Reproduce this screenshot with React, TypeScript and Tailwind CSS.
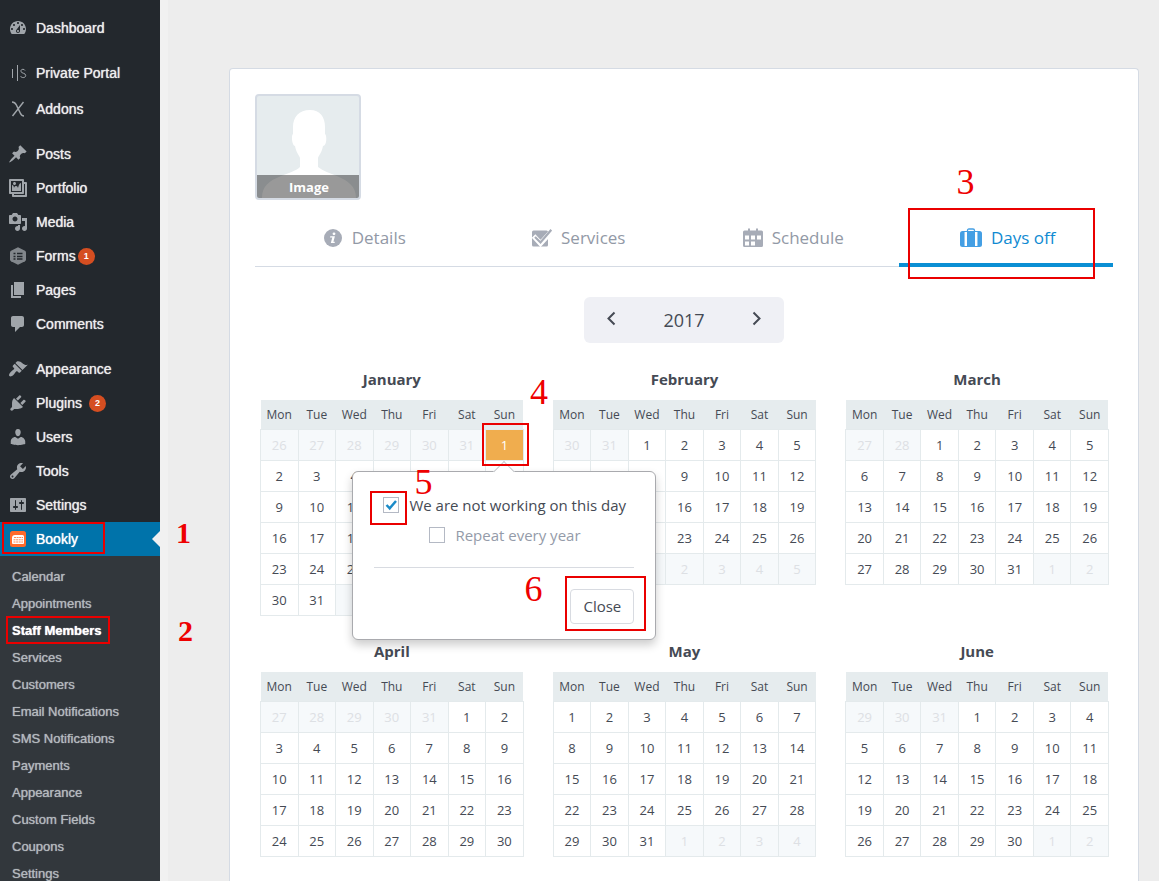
import { useState } from "react";
import type { ReactNode } from "react";

const YEAR = 2017;
const MONTHS = ["January", "February", "March", "April", "May", "June"];
const WEEKDAYS = ["Mon", "Tue", "Wed", "Thu", "Fri", "Sat", "Sun"];

type MenuItem = { label: string; icon: ReactNode; badge?: number; active?: boolean };

const Dash = ({ d }: { d: string }) => (
  <svg viewBox="0 0 20 20" className="w-5 h-5" fill="currentColor" fillRule="evenodd">
    <path d={d} />
  </svg>
);

const icons = {
  dashboard: <Dash d="M3.76 16h12.48c1.1-1.37 1.76-3.11 1.76-5 0-4.42-3.58-8-8-8s-8 3.58-8 8c0 1.89.66 3.63 1.76 5zM10 4c.55 0 1 .45 1 1s-.45 1-1 1-1-.45-1-1 .45-1 1-1zM6 6c.55 0 1 .45 1 1s-.45 1-1 1-1-.45-1-1 .45-1 1-1zm8 0c.55 0 1 .45 1 1s-.45 1-1 1-1-.45-1-1 .45-1 1-1zm-5.37 5.55L12 7v6c0 1.1-.9 2-2 2s-2-.9-2-2c0-.57.24-1.08.63-1.45zM4 10c.55 0 1 .45 1 1s-.45 1-1 1-1-.45-1-1 .45-1 1-1zm12 0c.55 0 1 .45 1 1s-.45 1-1 1-1-.45-1-1 .45-1 1-1zm-5 3c0-.55-.45-1-1-1s-1 .45-1 1 .45 1 1 1 1-.45 1-1z" />,
  portal: (
    <svg viewBox="0 0 20 20" className="w-5 h-5" fill="none" stroke="currentColor">
      <path d="M4.500 6v9M9.500 2v16" />
      <path d="M17 7.500c-.4-.8-1.100-1.200-2-1.200-1.300 0-2.100.7-2.100 1.800 0 2.700 4.800 1.500 4.800 4.300 0 1.400-1.100 2.200-2.500 2.200-1.300 0-2.200-.6-2.700-1.600" />
    </svg>
  ),
  addons: (
    <svg viewBox="0 0 20 20" className="w-5 h-5" fill="none" stroke="currentColor" strokeWidth="1.400">
      <path d="M4 3c2.500 0 3.200.8 4.300 2.900l4 8.200c1.100 2.200 1.700 2.900 3.700 2.900M15.500 3L4.500 17" />
    </svg>
  ),
  posts: <Dash d="M10.44 3.02l1.82-1.82 6.36 6.35-1.83 1.82c-1.05-.68-2.48-.57-3.41.36l-.75.75c-.92.93-1.04 2.35-.35 3.41l-1.83 1.82-2.41-2.41-2.8 2.79c-.42.42-3.38 2.71-3.8 2.29s1.86-3.39 2.28-3.81l2.79-2.79L4.1 9.36l1.83-1.82c1.05.69 2.48.57 3.4-.36l.75-.75c.93-.92 1.05-2.35.36-3.41z" />,
  portfolio: <Dash d="M16 4h1.96c.57 0 1.04.47 1.04 1.04v12.92c0 .57-.47 1.04-1.04 1.04H5.04C4.47 19 4 18.53 4 17.96V16H2.04C1.47 16 1 15.53 1 14.96V2.04C1 1.47 1.47 1 2.04 1h12.92c.57 0 1.04.47 1.04 1.04V4zM3 14h11V3H3v11zm5-8.5C8 4.67 7.33 4 6.5 4S5 4.67 5 5.5 5.67 7 6.5 7 8 6.33 8 5.5zm2 4.5s1-5 3-5v8H4V7c2 0 2 3 2 3s.33-2 2-2 2 2 2 2zm7 7V6h-1v8.96c0 .57-.47 1.04-1.04 1.04H6v1h11z" />,
  media: <Dash d="M13 11V4c0-.55-.45-1-1-1h-1.67L9 1H5L3.67 3H2c-.55 0-1 .45-1 1v7c0 .55.45 1 1 1h10c.55 0 1-.45 1-1zM7 4.5c1.38 0 2.5 1.12 2.5 2.5S8.38 9.5 7 9.5 4.5 8.38 4.5 7 5.62 4.5 7 4.5zM14 6h5v10.5c0 1.38-1.12 2.5-2.5 2.5S14 17.88 14 16.5s1.12-2.5 2.5-2.5c.17 0 .34.02.5.05V9h-3V6zm-4 8.05V13h2v3.5c0 1.38-1.12 2.5-2.5 2.5S7 17.88 7 16.5 8.12 14 9.5 14c.17 0 .34.02.5.05z" />,
  forms: (
    <svg viewBox="0 0 20 20" className="w-5 h-5">
      <path d="M10 1.200l7 3.600q1 .6 1 1.700v7q0 1.100-1 1.700l-7 3.600-7-3.600q-1-.6-1-1.700v-7q0-1.100 1-1.700z" fill="#82878c" />
      <path d="M5.500 7.500h2M9 7.500h5.500M5.500 10.500h2M9 10.500h5.500M5.500 13h2M9 13h5.500" stroke="#23282d" strokeWidth="1.300" />
    </svg>
  ),
  pages: <Dash d="M6 15V2h10v13H6zm-1 1h8v2H3V5h2v11z" />,
  comments: <Dash d="M5 2h9c1.1 0 2 .9 2 2v7c0 1.1-.9 2-2 2h-2l-5 5v-5H5c-1.1 0-2-.9-2-2V4c0-1.1.9-2 2-2z" />,
  appearance: <Dash d="M14.48 11.06L7.41 3.99l1.5-1.5c.5-.56 2.3-.47 3.51.32 1.21.8 1.43 1.28 2.91 2.1 1.18.64 2.45 1.26 4.45.85zm-.71.71L6.7 4.7 4.93 6.47c-.39.39-.39 1.02 0 1.41l1.06 1.06c.39.39.39 1.03 0 1.42-.6.6-1.43 1.11-2.21 1.69-.35.26-.7.53-1.01.84C1.43 14.23.4 16.08 1.4 17.07c.99 1 2.84-.03 4.18-1.36.31-.31.58-.66.85-1.02.57-.78 1.08-1.61 1.69-2.21.39-.39 1.02-.39 1.41 0l1.06 1.06c.39.39 1.02.39 1.41 0z" />,
  plugins: <Dash d="M13.11 4.36L9.87 7.6 8 5.73l3.24-3.24c.35-.34 1.05-.2 1.56.32.52.51.66 1.21.31 1.55zm-8 1.77l.91-1.12 9.01 9.01-1.19.84c-.71.71-2.63 1.16-3.82 1.16H6.14L4.9 17.26c-.59.59-1.54.59-2.12 0-.59-.58-.59-1.53 0-2.12l1.24-1.24v-3.88c0-1.13.4-3.19 1.09-3.89zm7.26 3.97l3.24-3.24c.34-.35 1.04-.21 1.55.31.52.51.66 1.21.31 1.55l-3.24 3.25z" />,
  users: <Dash d="M10 9.25c-2.27 0-2.73-3.44-2.73-3.44C7 4.02 7.82 2 9.97 2c2.16 0 2.98 2.02 2.71 3.81 0 0-.41 3.44-2.68 3.44zm0 2.57L12.72 10c2.39 0 4.52 2.33 4.52 4.53v2.49s-3.65 1.13-7.24 1.13c-3.65 0-7.24-1.13-7.24-1.13v-2.49c0-2.25 1.94-4.48 4.47-4.48z" />,
  tools: <Dash d="M16.68 9.77c-1.34 1.34-3.3 1.67-4.95.99l-5.41 6.52c-.99.99-2.59.99-3.58 0s-.99-2.59 0-3.57l6.52-5.42c-.68-1.65-.35-3.61.99-4.95 1.28-1.28 3.12-1.62 4.72-1.06l-2.89 2.89 2.82 2.82 2.86-2.87c.53 1.58.18 3.39-1.08 4.65zM3.81 16.21c.4.39 1.04.39 1.43 0 .4-.4.4-1.04 0-1.43-.39-.4-1.03-.4-1.43 0-.39.39-.39 1.03 0 1.43z" />,
  settings: <Dash d="M18 16V4c0-.55-.45-1-1-1H3c-.55 0-1 .45-1 1v12c0 .55.45 1 1 1h14c.55 0 1-.45 1-1zM8 11h1c.55 0 1 .45 1 1s-.45 1-1 1H8v1.5c0 .28-.22.5-.5.5s-.5-.22-.5-.5V13H6c-.55 0-1-.45-1-1s.45-1 1-1h1V5.5c0-.28.22-.5.5-.5s.5.22.5.5V11zm5-2h-1c-.55 0-1-.45-1-1s.45-1 1-1h1V5.5c0-.28.22-.5.5-.5s.5.22.5.5V7h1c.55 0 1 .45 1 1s-.45 1-1 1h-1v5.5c0 .28-.22.5-.5.5s-.5-.22-.5-.5V9z" />,
  bookly: (
    <svg viewBox="0 0 20 20" className="w-5 h-5">
      <rect x="2" y="2" width="16" height="16" rx="2.500" fill="#ff6a2b" />
      <path d="M7 6h7.500a1.500 1.500 0 0 1 1.500 1.500V14a1 1 0 0 1-1 1H5a1 1 0 0 1-1-1V9q0-3 3-3z" fill="#fff" />
      <path d="M6 8.500h9M5.500 10.800h9.500M5.500 13h9.500" stroke="#ff6a2b" strokeWidth=".8" strokeDasharray="2 .6" />
    </svg>
  ),
};

const menuGroups: MenuItem[][] = [
  [{ label: "Dashboard", icon: icons.dashboard }],
  [
    { label: "Private Portal", icon: icons.portal },
    { label: "Addons", icon: icons.addons },
  ],
  [
    { label: "Posts", icon: icons.posts },
    { label: "Portfolio", icon: icons.portfolio },
    { label: "Media", icon: icons.media },
    { label: "Forms", icon: icons.forms, badge: 1 },
    { label: "Pages", icon: icons.pages },
    { label: "Comments", icon: icons.comments },
  ],
  [
    { label: "Appearance", icon: icons.appearance },
    { label: "Plugins", icon: icons.plugins, badge: 2 },
    { label: "Users", icon: icons.users },
    { label: "Tools", icon: icons.tools },
    { label: "Settings", icon: icons.settings },
    { label: "Bookly", icon: icons.bookly, active: true },
  ],
];

const submenu = [
  "Calendar",
  "Appointments",
  "Staff Members",
  "Services",
  "Customers",
  "Email Notifications",
  "SMS Notifications",
  "Payments",
  "Appearance",
  "Custom Fields",
  "Coupons",
  "Settings",
];

// Red frame and step number laid over the control they point at
const Frame = ({ className }: { className: string }) => (
  <span className={`absolute border-2 border-[#ea0000] pointer-events-none ${className}`} />
);

const Step = ({ n, className }: { n: number; className: string }) => (
  <span className={`absolute font-['Liberation_Serif',serif] leading-none text-[#ee0000] pointer-events-none ${className}`}>{n}</span>
);

function Sidebar() {
  return (
    <nav className="relative z-20 w-40 shrink-0 bg-[#23282d] pt-[11px] font-['Liberation_Sans',sans-serif] text-sm">
      <div className="flex flex-col gap-[11px]">
        {menuGroups.map((group, g) => (
          <ul key={g} className={g === 1 ? "flex flex-col gap-0.5" : "flex flex-col"}>
            {group.map(item => (
              <li key={item.label} className={item.active ? "relative bg-[#0073aa]" : "relative"}>
                <a href="#" className="flex h-[34px] items-center pl-2">
                  <span className="text-[#a0a5aa]">{item.icon}</span>
                  <span className={`ml-2 [text-shadow:0_0_1px_currentColor] ${item.active ? "text-white" : "text-[#eeeeee]"}`}>{item.label}</span>
                  {item.badge && (
                    <span className={`flex size-[17px] items-center justify-center rounded-full bg-[#d54e21] text-[9px] font-bold text-white ${item.badge === 1 ? "ml-0.5" : "ml-[7px]"}`}>
                      {item.badge}
                    </span>
                  )}
                </a>
                {item.active && (
                  <>
                    <span className="absolute right-0 top-[9px] border-8 border-l-0 border-transparent border-r-[#f0f0f1]" />
                    <Frame className="left-0.5 top-0 w-[103px] h-8" />
                    <Step n={1} className="left-44 -top-1 text-3xl font-bold" />
                  </>
                )}
              </li>
            ))}
          </ul>
        ))}
      </div>
      <ul className="bg-[#32373c] pt-2 pb-2 text-[13px]">
        {submenu.map(label => {
          const current = label === "Staff Members";
          return (
            <li key={label} className="relative">
              <a href="#" className={`flex h-[27px] items-center pl-3 [text-shadow:0_0_1px_currentColor] ${current ? "font-bold text-white" : "text-[#b4b9be]"}`}>
                {label}
              </a>
              {current && (
                <>
                  <Frame className="left-1.5 -top-0.5 w-[104px] h-7" />
                  <Step n={2} className="left-[178px] -top-0.5 text-3xl font-bold" />
                </>
              )}
            </li>
          );
        })}
      </ul>
    </nav>
  );
}

function Avatar() {
  return (
    <button className="relative block size-[106px] overflow-hidden rounded border-2 border-[#d5dbe4] bg-[#e6ecee]">
      <svg viewBox="0 0 102 102" className="w-full h-full" fill="#fff">
        <path d="M53 14c-11 0-17 7-17 17v7c-2 1-1 12 2 12 1 6 4 9 5 12v9c-4 4-12 6-19 9C12 85 5 90 5 102h94c0-12-8-17-19-22-7-3-14-5-19-9v-9c1-3 4-6 5-12 4 0 4-11 2-12v-7c0-10-5-17-15-17z" />
      </svg>
      <span className="absolute inset-x-0 bottom-0 h-[23px] bg-black/40 pl-0.5 text-center text-[13px] leading-6 font-bold text-white">Image</span>
    </button>
  );
}

const tabs: { label: string; icon: ReactNode }[] = [
  {
    label: "Details",
    icon: (
      <svg viewBox="0 0 20 20" className="w-5 h-5 text-[#a7acb7]">
        <circle cx="10" cy="10" r="9" fill="currentColor" />
        <circle cx="11" cy="5.800" r="1.400" fill="#fff" />
        <path d="M7.300 8.300h4.600l-1.500 5.500h1.300v1.200H7.800l1.500-5.500H7z" fill="#fff" />
      </svg>
    ),
  },
  {
    label: "Services",
    icon: (
      <svg viewBox="0 0 20 20" className="w-5 h-5 text-[#a7acb7]">
        <rect y="2.500" width="16" height="16" rx="1.500" fill="currentColor" />
        <path d="M1.500 8l7 7.500L20 3" fill="none" stroke="#fff" strokeWidth="5" />
        <path d="M3 9l5.500 5.500L19.300 1.800" fill="none" stroke="currentColor" strokeWidth="2.200" />
      </svg>
    ),
  },
  {
    label: "Schedule",
    icon: (
      <svg viewBox="0 0 20 20" className="w-5 h-5 text-[#a7acb7]">
        <path d="M1.500 2.500H5V.5h2v2h6v-2h2v2h3.500Q20 2.500 20 4v13.500q0 1.500-1.500 1.500h-17Q0 19 0 17.500V4Q0 2.500 1.500 2.500z" fill="currentColor" />
        <path d="M2 7.500h4v4H2zM8 7.500h4v4H8zM14 7.500h4v4h-4zM2 13.500h4v4H2zM8 13.500h4v4H8z" fill="#fff" />
      </svg>
    ),
  },
  {
    label: "Days off",
    icon: (
      <svg viewBox="0 0 22 20" className="w-[22px] h-5 text-[#449fe4]">
        <path d="M7.500 4V2.500Q7.500 1 9 1h4q1.500 0 1.500 1.500V4" fill="none" stroke="currentColor" strokeWidth="1.300" />
        <rect y="3" width="22" height="16" rx="2.500" fill="currentColor" />
        <path d="M4 4h3v14H4zM15 4h3v14h-3z" fill="#fff" />
        <path d="M4.300 4v14M17.700 4v14" stroke="currentColor" strokeWidth=".7" />
      </svg>
    ),
  },
];

function Tabs() {
  const [active, setActive] = useState("Days off");

  return (
    <div role="tablist" className="mt-2.5 grid grid-cols-4 border-b border-[#d5dbe4]">
      {tabs.map(tab => (
        <div key={tab.label} className="relative">
          <button
            role="tab"
            aria-selected={active === tab.label}
            onClick={() => setActive(tab.label)}
            className={`-mb-px flex h-[57px] w-full items-center justify-center gap-[9px] border-b-4 pt-0.5 pl-1 text-[17px] ${
              active === tab.label ? "border-[#0a8fd4] text-[#0f8ad2]" : "border-transparent text-[#9299a6]"
            }`}
          >
            {tab.icon}
            {tab.label}
          </button>
          {tab.label === "Days off" && (
            <>
              <Frame className="left-[9px] -top-0.5 w-[187px] h-[71px]" />
              <Step n={3} className="left-[58px] -top-[46px] text-4xl" />
            </>
          )}
        </div>
      ))}
    </div>
  );
}

function CheckBox({ id, checked, onChange }: { id: string; checked: boolean; onChange: (v: boolean) => void }) {
  return (
    <span className="grid size-4 shrink-0">
      <input
        id={id}
        type="checkbox"
        checked={checked}
        onChange={e => onChange(e.target.checked)}
        className="col-start-1 row-start-1 size-4 appearance-none border border-[#b4b9c4] bg-white"
      />
      {checked && (
        <svg viewBox="0 0 16 16" className="col-start-1 row-start-1 size-4 pointer-events-none" fill="none" stroke="#1b8bc8" strokeWidth="2.500">
          <path d="M3.500 8l3.200 3.300L13 4" />
        </svg>
      )}
    </span>
  );
}

function DayOffPopover() {
  const [dayOff, setDayOff] = useState(true);
  const [repeat, setRepeat] = useState(false);

  return (
    <div className="absolute left-1/2 top-[41px] z-10 w-[304px] -translate-x-1/2 rounded-md border border-[#a9aaae] bg-white px-[21px] pt-[18px] pb-[15px] text-left text-[15px] text-[#454a54] shadow-[0_5px_10px_rgba(0,0,0,0.2)]">
      <span className="absolute left-1/2 -top-2 size-[15px] -translate-x-1/2 rotate-45 border-l border-t border-[#c4c6ca] bg-white" />
      <div className="relative flex h-[30px] items-center gap-2.5 pl-[9px] whitespace-nowrap">
        <CheckBox id="day-off" checked={dayOff} onChange={setDayOff} />
        <label htmlFor="day-off">We are not working on this day</label>
        <Frame className="-left-1 top-px w-[37px] h-[34px]" />
        <Step n={5} className="left-10 -top-[26px] text-4xl" />
      </div>
      <div className="flex h-[30px] items-center gap-2.5 pl-[55px] whitespace-nowrap text-[#949ba9]">
        <CheckBox id="repeat" checked={repeat} onChange={setRepeat} />
        <label htmlFor="repeat">Repeat every year</label>
      </div>
      <hr className="mt-[17px] border-[#d8dbe1]" />
      <div className="mt-[21px] flex justify-end">
        <div className="relative">
          <button className="h-[35px] w-16 rounded border border-[#d8dbe1] bg-white">Close</button>
          <Frame className="-left-[5px] -top-[13px] w-[81px] h-[55px]" />
          <Step n={6} className="-left-[46px] -top-[18px] text-4xl" />
        </div>
      </div>
    </div>
  );
}

function Month({ index }: { index: number }) {
  const offset = (new Date(YEAR, index, 1).getDay() + 6) % 7;
  const days = new Date(YEAR, index + 1, 0).getDate();
  const weeks = Math.ceil((offset + days) / 7);

  return (
    <section className="min-h-[247px]">
      <h3 className="mb-[11px] text-center text-[15px] leading-5 font-bold">{MONTHS[index]}</h3>
      <table className="w-full table-fixed border-collapse">
        <thead>
          <tr className="h-[29px] bg-[#e6ecee]">
            {WEEKDAYS.map(d => (
              <th key={d} className="px-0 pt-0.5 pb-0 text-center text-xs font-normal">{d}</th>
            ))}
          </tr>
        </thead>
        <tbody>
          {Array.from({ length: weeks }, (_, w) => (
            <tr key={w} className="h-[31px]">
              {WEEKDAYS.map((d, i) => {
                const date = new Date(YEAR, index, w * 7 + i - offset + 1);
                const outside = date.getMonth() !== index;
                const selected = index === 0 && !outside && date.getDate() === 1;
                return (
                  <td
                    key={d}
                    className={`border border-[#e4eaec] p-0 text-center text-[13px] ${
                      selected ? "bg-[#f0ad4e] text-white" : outside ? "bg-[#f6f9fb] text-[#dde0e4]" : "bg-white"
                    }`}
                  >
                    <div className="relative h-[30px] leading-[30px]">
                      {date.getDate()}
                      {selected && (
                        <>
                          <DayOffPopover />
                          <Frame className="-left-1 -top-[7px] z-10 w-[47px] h-[43px]" />
                          <Step n={4} className="left-11 -top-[56px] text-4xl" />
                        </>
                      )}
                    </div>
                  </td>
                );
              })}
            </tr>
          ))}
        </tbody>
      </table>
    </section>
  );
}

export default function App() {
  const [year, setYear] = useState(YEAR);

  return (
    <div className="flex h-screen overflow-hidden bg-[#ededed] font-['Open_Sans',sans-serif] text-[#454a54]">
      <Sidebar />
      <main className="flex min-w-0 flex-1 flex-col border-l-8 border-[#f1f1f1] pl-[61px] pr-5 pt-[68px]">
        <div className="flex-1 rounded-t border border-b-0 border-[#d5dbe4] bg-white px-[25px] pt-[25px]">
          <Avatar />
          <Tabs />
          <div className="mx-auto mt-[30px] flex h-[46px] w-[200px] items-center justify-between rounded-md bg-[#eff0f5] px-5">
            <button aria-label="Previous year" onClick={() => setYear(year - 1)}>
              <svg viewBox="0 0 16 20" className="w-4 h-5" fill="none" stroke="currentColor" strokeWidth="2">
                <path d="M10.500 2.500L4.500 8.500l6 6" />
              </svg>
            </button>
            <span className="text-lg">{year}</span>
            <button aria-label="Next year" onClick={() => setYear(year + 1)}>
              <svg viewBox="0 0 16 20" className="w-4 h-5" fill="none" stroke="currentColor" strokeWidth="2">
                <path d="M5.500 2.500l6 6-6 6" />
              </svg>
            </button>
          </div>
          <div className="mt-[26px] grid grid-cols-3 gap-x-[29px] gap-y-[25px] pl-[5px] pr-1">
            {MONTHS.map((name, i) => (
              <Month key={name} index={i} />
            ))}
          </div>
        </div>
      </main>
    </div>
  );
}
